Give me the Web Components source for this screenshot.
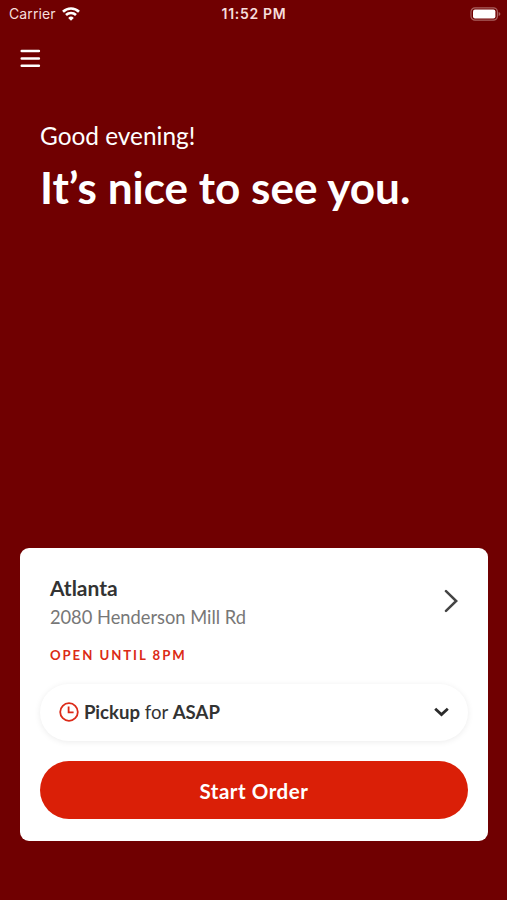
<!DOCTYPE html>
<html lang="en">
<head>
<meta charset="utf-8">
<title>Start Order</title>
<style>
  body {
    margin: 0;
    background: #700001;
    font-family: Lato, "Liberation Sans", sans-serif;
  }
</style>
</head>
<body>
<order-app>
  <status-bar slot="status" carrier="Carrier" time="11:52 PM"></status-bar>
  <menu-button slot="nav"></menu-button>
  <welcome-message slot="greeting">
    <span slot="hello">Good evening!</span>
    It’s nice to see you.
  </welcome-message>
  <order-card slot="card">
    <store-info slot="store">
      <span slot="name">Atlanta</span>
      <span slot="address">2080 Henderson Mill Rd</span>
      <span slot="hours">OPEN UNTIL 8PM</span>
    </store-info>
    <pickup-select><b>Pickup</b> for <b>ASAP</b></pickup-select>
    <start-button>Start Order</start-button>
  </order-card>
</order-app>

<script>
const define = (name, content) => {
  customElements.define(name, class extends HTMLElement {
    constructor() {
      super();
      this.attachShadow({ mode : 'open' });
      this.shadowRoot.innerHTML = content;
    }
  });
};

define('order-app', `
  <style>
    :host {
      display: flex;
      flex-direction: column;
      box-sizing: border-box;
      height: 900px;
      padding-bottom: 59px;
      background: #700001;
      color: #fff;
      overflow: hidden;
    }

    .space {
      flex: 1;
    }
  </style>
  <slot name="status"></slot>
  <slot name="nav"></slot>
  <slot name="greeting"></slot>
  <div class="space"></div>
  <slot name="card"></slot>
`);

class StatusBar extends HTMLElement {
  constructor() {
    super();
    this.attachShadow({ mode : 'open' });
    this.shadowRoot.innerHTML = `
      <style>
        :host {
          display: grid;
          grid-template-columns: 1fr auto 1fr;
          align-items: center;
          height: 27px;
          padding: 0 6px 0 9px;
          font-family: Inter, Roboto, sans-serif;
          font-size: 14px;
          color: #f6dedc;
        }

        svg {
          display: block;
        }

        .left {
          display: flex;
          align-items: center;
          gap: 6px;
        }

        .carrier {
          letter-spacing: 0.1px;
        }

        .time {
          font-weight: 600;
          font-size: 14px;
          letter-spacing: 0.7px;
          margin-right: 2px;
        }

        .battery {
          justify-self: end;
        }
      </style>
      <div class="left">
        <span class="carrier"></span>
        <svg width="18" height="14" viewBox="0 0 18 14" fill="none" stroke="#fff" stroke-width="2.6">
          <path d="M1 4.8a11.4 11.4 0 0 1 16 0M4 8a7.1 7.1 0 0 1 10 0"/>
          <path d="M9 13.7l-2.8-2.8a4 4 0 0 1 5.6 0z" fill="#fff" stroke="none"/>
        </svg>
      </div>
      <span class="time"></span>
      <svg class="battery" width="31" height="14" viewBox="0 0 31 14">
        <rect x="1" y=".8" width="26.4" height="12.4" rx="4" fill="none" stroke="#a9605f" stroke-width="1.2"/>
        <rect x="3" y="2.4" width="22.4" height="9.2" rx="2" fill="#fff"/>
        <path d="M28.6 5v4q1.8-.6 1.8-2t-1.8-2z" fill="#a9605f"/>
      </svg>
    `;
  }

  connectedCallback() {
    this.shadowRoot.querySelector('.carrier').textContent = this.getAttribute('carrier');
    this.shadowRoot.querySelector('.time').textContent = this.getAttribute('time');
  }
}

customElements.define('status-bar', StatusBar);

define('menu-button', `
  <style>
    :host {
      display: block;
      padding: 22px 0 0 20px;
      cursor: pointer;
    }

    svg {
      display: block;
    }
  </style>
  <svg width="21" height="20" viewBox="0 0 21 20" stroke="#fff" stroke-width="2.5" stroke-linecap="round">
    <path d="M1.7 2h17.2M1.7 9.4h17.2M1.7 16.8h17.2"/>
  </svg>
`);

define('welcome-message', `
  <style>
    :host {
      display: block;
      padding: 52px 40px 0;
      font-size: 44.1px;
      line-height: 50px;
      font-weight: 700;
    }

    .hello {
      margin-bottom: 11px;
      font-size: 24.4px;
      line-height: 30px;
      font-weight: 400;
    }
  </style>
  <div class="hello"><slot name="hello"></slot></div>
  <slot></slot>
`);

define('order-card', `
  <style>
    :host {
      display: flex;
      flex-direction: column;
      box-sizing: border-box;
      height: 293px;
      margin: 0 19.5px 0 20.4px;
      padding: 25px 19.5px 22px;
      border-radius: 9px;
      background: #fff;
      color: #333;
    }
  </style>
  <slot name="store"></slot>
  <slot></slot>
`);

define('store-info', `
  <style>
    :host {
      display: flex;
      justify-content: space-between;
      height: 111px;
      padding: 0 10px;
      cursor: pointer;
    }

    .name {
      font-size: 21px;
      line-height: 30px;
      font-weight: 700;
    }

    .address {
      margin-top: 1px;
      font-size: 18.3px;
      line-height: 27px;
      color: #777;
    }

    .hours {
      margin-top: 14px;
      font-size: 13.2px;
      line-height: 20px;
      font-weight: 700;
      letter-spacing: 1.95px;
      color: #db2a15;
    }

    svg {
      display: block;
      margin-top: 16px;
    }
  </style>
  <div>
    <div class="name"><slot name="name"></slot></div>
    <div class="address"><slot name="address"></slot></div>
    <div class="hours"><slot name="hours"></slot></div>
  </div>
  <svg width="14" height="24" viewBox="0 0 14 24" fill="none" stroke="#444" stroke-width="2.5" stroke-linecap="round">
    <path d="M2 2.2l10.200 9.800L2 21.800"/>
  </svg>
`);

define('pickup-select', `
  <style>
    :host {
      display: flex;
      align-items: center;
      box-sizing: border-box;
      height: 57px;
      padding: 0 19px 1px;
      border-radius: 29px;
      background: #fff;
      box-shadow: 0 1px 6px rgba(0,0,0,0.08);
      font-size: 18.6px;
      cursor: pointer;
    }

    .label {
      flex: 1;
      margin-left: 5px;
    }
  </style>
  <svg width="20" height="20" viewBox="0 0 20 20" fill="none" stroke="#dc2a18" stroke-width="1.8">
    <circle cx="10" cy="10" r="8.800"/>
    <path d="M9.600 4.600v5.700h5"/>
  </svg>
  <span class="label"><slot></slot></span>
  <svg width="15" height="10" viewBox="0 0 15 10" fill="none" stroke="#2b2b2b" stroke-width="2.800">
    <path d="M1.200 1.700l6.300 5.900L13.800 1.700"/>
  </svg>
`);

define('start-button', `
  <style>
    :host {
      display: flex;
      align-items: center;
      justify-content: center;
      height: 58px;
      margin-top: 20px;
      padding-top: 1px;
      box-sizing: border-box;
      border-radius: 29px;
      background: #da1f07;
      color: #fff;
      font-size: 20.5px;
      font-weight: 700;
      letter-spacing: 0.55px;
      cursor: pointer;
    }
  </style>
  <slot></slot>
`);
</script>
</body>
</html>
